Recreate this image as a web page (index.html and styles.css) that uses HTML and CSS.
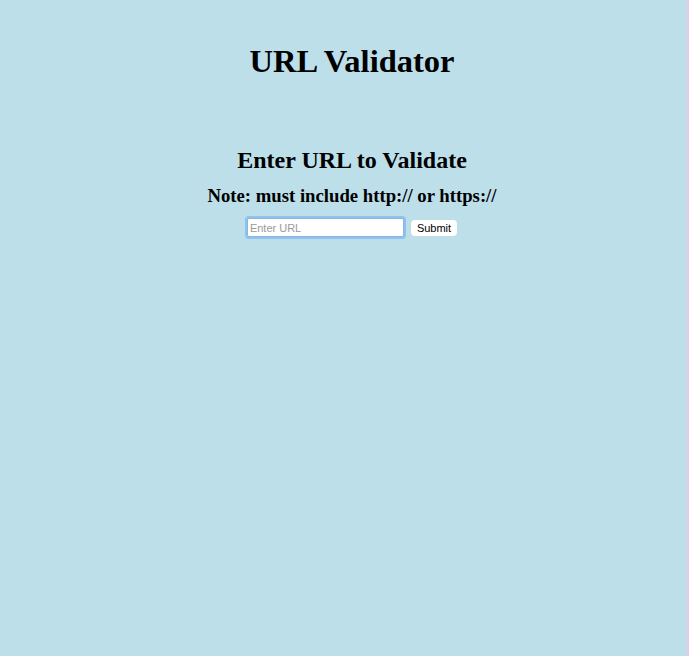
FILE: index.html
```html
<!DOCTYPE html>
<html>
<head>
<meta charset="utf-8">
<title>URL Validator</title>
<link rel="stylesheet" href="styles.css">
</head>
<body>
<div class="page">
  <h1 class="title">URL Validator</h1>
  <h2 class="subtitle">Enter URL to Validate</h2>
  <h3 class="note">Note: must include http:// or https://</h3>
  <form class="form" onsubmit="return false">
    <input class="url-input" type="text" placeholder="Enter URL">
    <button class="submit-btn" type="submit">Submit</button>
  </form>
</div>
</body>
</html>
```
FILE: styles.css
```css
html, body {
  margin: 0;
  padding: 0;
  height: 100%;
}
body {
  background: #bcdfea;
  font-family: "Liberation Serif", "Times New Roman", serif;
  color: #000;
  border-right: 2px solid #e6c8ee;
  box-sizing: border-box;
}
.page {
  display: flex;
  flex-direction: column;
  align-items: center;
  padding-top: 43px;
  padding-left: 17px;
}
.title {
  font-size: 32.5px;
  font-weight: bold;
  line-height: 37px;
  margin: 0;
}
.subtitle {
  font-size: 24px;
  font-weight: bold;
  line-height: 28px;
  margin: 66px 0 0;
}
.note {
  font-size: 18.72px;
  font-weight: bold;
  line-height: 22px;
  margin: 11px 0 0;
}
.form {
  display: flex;
  align-items: center;
  gap: 5px;
  margin-top: 11px;
}
.url-input {
  width: 157px;
  height: 19px;
  box-sizing: border-box;
  border: 1px solid #8fb4d6;
  outline: 2px solid #8cc3f2;
  outline-offset: 0;
  border-radius: 2px;
  background: #fff;
  font-family: "Liberation Sans", Arial, sans-serif;
  font-size: 11px;
  padding: 0 2px;
  margin: 0;
}
.url-input::placeholder {
  color: #9a9a9a;
}
.submit-btn {
  height: 16px;
  box-sizing: border-box;
  border: none;
  border-radius: 4px;
  background: #fff;
  font-family: "Liberation Sans", Arial, sans-serif;
  font-size: 11px;
  padding: 0 6px;
  line-height: 16px;
  margin: 0 0 0 2px;
  color: #000;
  box-shadow: 0 0 0 0.5px #c8d8de;
}
```
